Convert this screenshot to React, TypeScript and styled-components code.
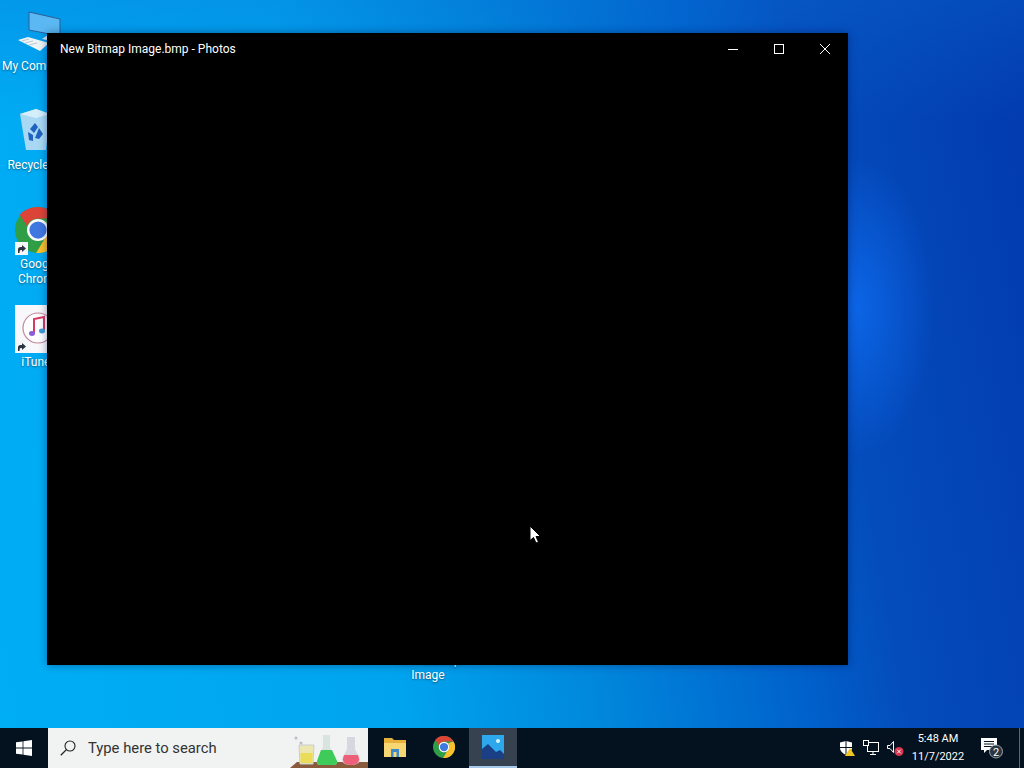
import React from "react";
import styled, { createGlobalStyle } from "styled-components";

const GlobalStyle = createGlobalStyle`
  html, body {
    margin: 0;
    padding: 0;
    width: 1024px;
    height: 768px;
    overflow: hidden;
    font-family: Roboto, "Noto Sans", sans-serif;
  }
`;

const Screen = styled.div`
  display: flex;
  flex-direction: column;
  width: 1024px;
  height: 768px;
  overflow: hidden;
`;

const Desktop = styled.div`
  position: relative;
  flex: 1;
  overflow: hidden;
  background:
    radial-gradient(ellipse 80px 150px at 855px 307px, rgba(15, 110, 245, 0.75), rgba(15, 110, 245, 0) 100%),
    linear-gradient(180deg, rgba(10, 110, 215, 0.3), rgba(10, 110, 215, 0) 120px),
    linear-gradient(80deg, #00aef5 0%, #00a4ee 35%, #0088dc 52%, #0062cc 70%, #044cbc 79%, #023aae 100%);
`;

const DesktopIcon = styled.div<{ $x: number; $y: number }>`
  position: absolute;
  left: ${(p) => p.$x}px;
  top: ${(p) => p.$y}px;
  width: 76px;
  display: flex;
  flex-direction: column;
  align-items: center;
`;

const IconArt = styled.div`
  position: relative;
  width: 48px;
  height: 48px;
`;

const IconLabel = styled.span`
  margin-top: 2px;
  color: #fff;
  font-size: 12px;
  line-height: 15px;
  text-align: center;
  white-space: nowrap;
  text-shadow: 0 1px 2px rgba(0, 0, 0, 0.45);
`;

const ShortcutBadge = styled.svg`
  position: absolute;
  left: 0;
  bottom: 0;
`;

const PhotosWindow = styled.div`
  position: absolute;
  left: 47px;
  top: 33px;
  width: 801px;
  height: 632px;
  background: #000;
  box-shadow: 0 0 8px rgba(0, 20, 70, 0.45);
`;

const TitleBar = styled.div`
  display: flex;
  align-items: center;
  height: 32px;
  padding-left: 13px;
  color: #fff;
  font-size: 12px;
`;

const TitleText = styled.span`
  flex: 1;
  margin-bottom: 1px;
`;

const CaptionButton = styled.div`
  display: flex;
  align-items: center;
  justify-content: center;
  width: 46px;
  height: 32px;
`;

const Pointer = styled.svg`
  position: absolute;
  left: 529px;
  top: 525px;
`;

const Taskbar = styled.div`
  display: flex;
  align-items: stretch;
  height: 40px;
  background: #04121f;
`;

const StartButton = styled.div`
  display: flex;
  align-items: center;
  justify-content: center;
  width: 48px;
`;

const SearchBox = styled.div`
  position: relative;
  display: flex;
  align-items: center;
  width: 320px;
  background: #f1f2f2;
  overflow: hidden;
`;

const SearchIcon = styled.svg`
  margin-left: 12px;
`;

const SearchText = styled.span`
  margin-left: 12px;
  color: #333;
  font-size: 14.8px;
`;

const SearchArt = styled.svg`
  position: absolute;
  right: 0;
  bottom: 0;
`;

const TaskStrip = styled.div`
  display: flex;
  gap: 1px;
  margin-left: 3px;
`;

const TaskTile = styled.div<{ $active?: boolean }>`
  display: flex;
  align-items: center;
  justify-content: center;
  width: 48px;
  box-sizing: border-box;
  background: ${(p) => (p.$active ? "#36424f" : "transparent")};
  border-bottom: 2px solid ${(p) => (p.$active ? "#a6c8ec" : "transparent")};
`;

const Tray = styled.div`
  display: flex;
  align-items: stretch;
  margin-left: auto;
`;

const TrayIcon = styled.div`
  display: flex;
  align-items: center;
  justify-content: center;
  width: 24px;
`;

const Clock = styled.div`
  display: flex;
  flex-direction: column;
  align-items: center;
  justify-content: center;
  width: 62px;
  color: #fff;
  font-size: 11px;
  line-height: 18px;
`;

const NotifyButton = styled.div`
  display: flex;
  align-items: center;
  justify-content: center;
  width: 47px;
`;

const ShowDesktop = styled.div`
  width: 4px;
  margin-left: 3px;
  border-left: 1px solid #5a6672;
`;

const Shortcut = () => (
  <ShortcutBadge width="13" height="13" viewBox="0 0 13 13">
    <rect width="13" height="13" fill="#f4f6f8" />
    <path d="M3 11V7.5C3 6 4 5 5.5 5H7V3l4 3.5L7 10V8H6C5 8 4.5 8.6 4.5 11Z" fill="#2a3440" />
  </ShortcutBadge>
);

const ChromeLogo = ({ size }: { size: number }) => (
  <svg width={size} height={size} viewBox="0 0 48 48">
    <circle cx="24" cy="24" r="24" fill="#2f9e46" />
    <path d="M24 0a24 24 0 0 1 20.8 12H24a12 12 0 0 0-11.3 8L5 8.2A24 24 0 0 1 24 0Z" fill="#dc4437" />
    <path d="M44.8 12A24 24 0 0 1 22 48l10.5-17.5A12 12 0 0 0 33 16Z" fill="#fbc02d" />
    <circle cx="24" cy="24" r="11.5" fill="#fff" />
    <circle cx="24" cy="24" r="9" fill="#3f78e0" />
  </svg>
);

export default function App() {
  return (
    <Screen>
      <GlobalStyle />
      <Desktop>
        <DesktopIcon $x={0} $y={9}>
          <IconArt>
            <svg width="48" height="48" viewBox="0 -1 48 48">
              <path d="M15 2 46 9V26L15 20Z" fill="#5cb8f2" stroke="#2b5f96" strokeWidth="1" />
              <path d="M34 25 42 27 38 31 28 29Z" fill="#dfeaf3" />
              <path d="M4 30 14 27 35 33 26 41Z" fill="#eef3f6" />
              <path d="M8 31 15 29M11 33 19 31M15 35 23 33" stroke="#b9c6d1" strokeWidth="1" />
            </svg>
          </IconArt>
          <IconLabel>My Computer</IconLabel>
        </DesktopIcon>

        <DesktopIcon $x={0} $y={108}>
          <IconArt>
            <svg width="48" height="48" viewBox="3 0 48 48">
              <path d="M9 6 25 1 39 6 35 42 15 42Z" fill="#a8d8f4" />
              <path d="M9 6 25 1 39 6 25 10Z" fill="#d5eefb" />
              <path d="M19 21 24 15 27 19 23 25ZM28 20 32 26 28 31 24 30ZM17 24 22 27 22 33 18 32Z" fill="#1f62c0" />
            </svg>
          </IconArt>
          <IconLabel>Recycle Bin</IconLabel>
        </DesktopIcon>

        <DesktopIcon $x={1} $y={207}>
          <IconArt>
            <ChromeLogo size={46} />
            <Shortcut />
          </IconArt>
          <IconLabel>
            Google
            <br />
            Chrome
          </IconLabel>
        </DesktopIcon>

        <DesktopIcon $x={1} $y={305}>
          <IconArt>
            <svg width="48" height="48" viewBox="0 0 48 48">
              <rect width="48" height="48" fill="#f8f7fb" />
              <circle cx="23" cy="23" r="15" fill="#fff" stroke="#c08a9c" strokeWidth="1.2" />
              <path d="M19 28V14L29 12V25" fill="none" stroke="#d83a62" strokeWidth="2" />
              <ellipse cx="17" cy="28.5" rx="3" ry="2.4" fill="#8b5ed6" />
              <ellipse cx="27" cy="26" rx="3" ry="2.4" fill="#3f9bd8" />
            </svg>
            <Shortcut />
          </IconArt>
          <IconLabel>iTunes</IconLabel>
        </DesktopIcon>

        <DesktopIcon $x={390} $y={651}>
          <IconLabel>
            New Bitmap
            <br />
            Image
          </IconLabel>
        </DesktopIcon>

        <PhotosWindow>
          <TitleBar>
            <TitleText>New Bitmap Image.bmp - Photos</TitleText>
            <CaptionButton>
              <svg width="10" height="10" viewBox="0 0 10 10">
                <path d="M0 5.5H10" stroke="#fff" strokeWidth="1" />
              </svg>
            </CaptionButton>
            <CaptionButton>
              <svg width="10" height="10" viewBox="0 0 10 10">
                <rect x="0.5" y="0.5" width="9" height="9" fill="none" stroke="#fff" strokeWidth="1" />
              </svg>
            </CaptionButton>
            <CaptionButton>
              <svg width="10" height="10" viewBox="0 0 10 10">
                <path d="M0 0 10 10M10 0 0 10" stroke="#fff" strokeWidth="1" />
              </svg>
            </CaptionButton>
          </TitleBar>
        </PhotosWindow>

        <Pointer width="12" height="19" viewBox="0 0 12 19">
          <path d="M1 1V15.5L4.5 12.5 7 18 9.5 17 7 11.5H11.5Z" fill="#fff" stroke="#000" strokeWidth="1" />
        </Pointer>
      </Desktop>

      <Taskbar>
        <StartButton>
          <svg width="16" height="16" viewBox="0 0 16 16">
            <path d="M0 2.3 6.6 1.4V7.5H0ZM7.4 1.3 16 0V7.5H7.4ZM0 8.4H6.6V14.6L0 13.7ZM7.4 8.4H16V16L7.4 14.7Z" fill="#fff" />
          </svg>
        </StartButton>

        <SearchBox>
          <SearchIcon width="16" height="16" viewBox="0 0 16 16">
            <circle cx="10" cy="6" r="5" fill="none" stroke="#222" strokeWidth="1.1" />
            <path d="M6.4 9.6 0.8 15.2" stroke="#222" strokeWidth="1.3" />
          </SearchIcon>
          <SearchText>Type here to search</SearchText>
          <SearchArt width="78" height="35" viewBox="0 0 78 35">
            <path d="M7 29H78V35H0Z" fill="#8a5a3c" />
            <path d="M9 12H24L23 31H10Z" fill="#ece7b0" stroke="#c9cdd0" />
            <path d="M10.5 20H22.5V30H10.5Z" fill="#eadc58" />
            <path d="M33 2H40V14L47 28Q48 32 43 32H31Q26 32 27 28L33 14Z" fill="#d8e4e0" />
            <path d="M31 17H42L47 28Q48 32 43 32H31Q26 32 27 28Z" fill="#3ecb5a" />
            <path d="M57 4H65V16L70 26Q70 32 61 32Q52 32 52 26L57 16Z" fill="#d6d8e0" />
            <path d="M54 22H68Q72 32 61 32Q50 32 54 22Z" fill="#ee5f78" />
            <circle cx="6" cy="5" r="1.5" fill="#b8bec4" />
            <circle cx="11" cy="10" r="1.5" fill="#b8bec4" />
          </SearchArt>
        </SearchBox>

        <TaskStrip>
          <TaskTile>
            <svg width="22" height="20" viewBox="0 0 22 20">
              <path d="M0 1H8L10 3H22V6H0Z" fill="#e8b23a" />
              <path d="M0 6H22V20H0Z" fill="#f7d774" />
              <path d="M7 12H15V20H7Z" fill="#3f89c9" />
              <path d="M9.5 15H12.5V20H9.5Z" fill="#f7d774" />
            </svg>
          </TaskTile>
          <TaskTile>
            <ChromeLogo size={22} />
          </TaskTile>
          <TaskTile $active>
            <svg width="22" height="24" viewBox="0 0 22 24">
              <rect width="22" height="24" fill="#2ea8ec" />
              <circle cx="16" cy="6" r="2" fill="#d8f2ff" />
              <path d="M0 14 6 9 14 17 18 15 22 19V24H0Z" fill="#1a3f84" />
            </svg>
          </TaskTile>
        </TaskStrip>

        <Tray>
          <TrayIcon>
            <svg width="16" height="16" viewBox="0 0 16 16">
              <path d="M1 2.5 7 1 13 2.5V8Q13 12 7 15Q1 12 1 8Z" fill="#fff" />
              <path d="M7 1V15M1 7.5H13" stroke="#04121f" strokeWidth="1" />
              <path d="M11 8 16 16H6Z" fill="#f3c623" />
            </svg>
          </TrayIcon>
          <TrayIcon>
            <svg width="16" height="16" viewBox="0 0 16 16">
              <rect x="4.5" y="2.5" width="11" height="9" fill="none" stroke="#fff" strokeWidth="1" />
              <rect x="0.5" y="0.5" width="5" height="5" fill="#04121f" stroke="#fff" strokeWidth="1" />
              <path d="M10 12V14M7 14.5H13" stroke="#fff" strokeWidth="1" />
            </svg>
          </TrayIcon>
          <TrayIcon>
            <svg width="17" height="16" viewBox="0 0 17 16">
              <path d="M0.5 5.5H3L6.5 1.5V12.5L3 8.5H0.5Z" fill="none" stroke="#fff" strokeWidth="1" />
              <circle cx="12" cy="11.5" r="4.5" fill="#d8344f" />
              <path d="M10.2 9.7 13.8 13.3M13.8 9.7 10.2 13.3" stroke="#fff" strokeWidth="1" />
            </svg>
          </TrayIcon>
          <Clock>
            <span>5:48 AM</span>
            <span>11/7/2022</span>
          </Clock>
          <NotifyButton>
            <svg width="24" height="22" viewBox="0 0 24 22">
              <path d="M0 1H16V13H6L3 16V13H0Z" fill="#fff" />
              <path d="M3 4.5H13M3 7H13M3 9.5H13" stroke="#04121f" strokeWidth="1" />
              <circle cx="15" cy="14.5" r="6.5" fill="#2b3641" stroke="#9aa4ad" strokeWidth="1" />
              <text x="15" y="18.5" fill="#fff" fontSize="11" textAnchor="middle" fontFamily="Roboto, sans-serif">
                2
              </text>
            </svg>
          </NotifyButton>
          <ShowDesktop />
        </Tray>
      </Taskbar>
    </Screen>
  );
}
